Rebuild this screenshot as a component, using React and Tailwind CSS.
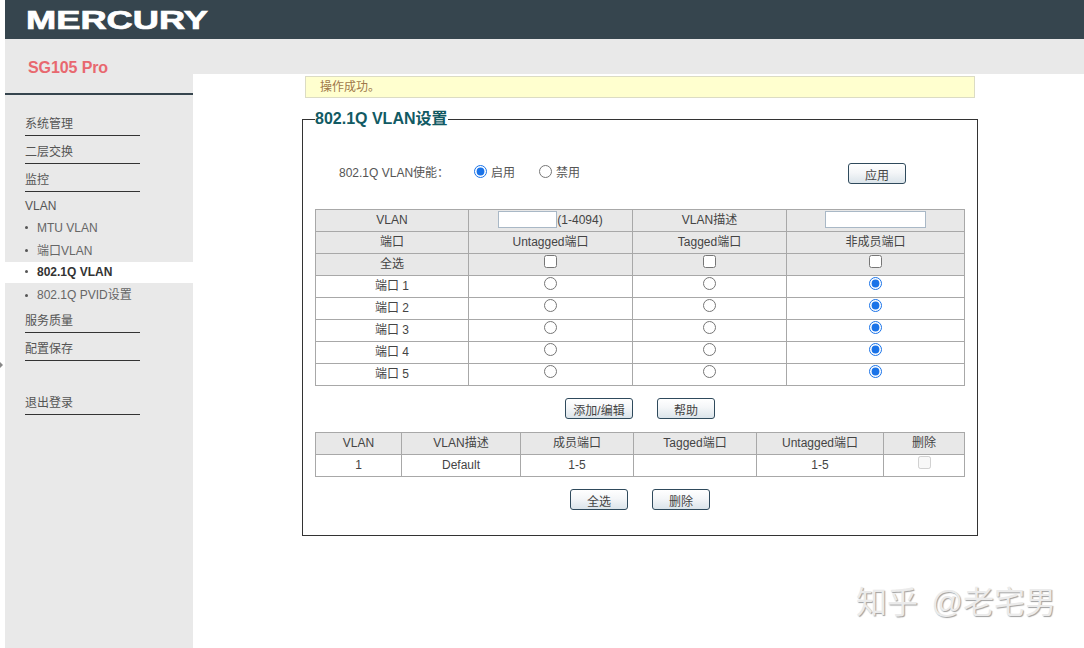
import React from 'react';

const FONT = "font-['Liberation_Sans','Noto_Sans_CJK_SC',sans-serif]";

const Btn = ({ children, className = '' }) => (
  <button
    type="button"
    className={`h-[21px] w-[58px] rounded-[3px] border border-[#2f4a5c] bg-[linear-gradient(180deg,#ffffff_0%,#f4f6f8_45%,#dbe4ea_100%)] pt-[6px] text-center text-xs leading-[13px] text-[#444] ${className}`}
  >
    {children}
  </button>
);

const MenuLine = ({ children }) => (
  <div className="flex h-7 w-[115px] items-center border-b border-[#333] pt-[5px] text-xs text-[#555]">
    {children}
  </div>
);

const SubItem = ({ children, className = 'h-[23px]', active }) => (
  <div
    className={`flex items-center pl-5 text-xs ${className} ${active ? 'bg-white font-bold text-[#333]' : 'text-[#666]'}`}
  >
    <span className="mr-[9px] h-[3px] w-[3px] rounded-full bg-[#555]" />
    {children}
  </div>
);

const cell = 'h-[22px] border border-[#a8a8a8] p-0 pb-[2px] text-center align-middle text-xs leading-none font-normal text-[#444]';
const head = `${cell} bg-[#e8e8e8]`;
const check = 'm-0 mb-[5px] align-middle accent-[#1a73e8]';

const ports = ['端口 1', '端口 2', '端口 3', '端口 4', '端口 5'];

export default function App() {
  return (
    <div className={`relative h-[648px] w-[1084px] overflow-hidden bg-white pl-[5px] ${FONT}`}>
      <header className="flex h-[39px] items-center bg-[#36454e] pl-[20px]">
        <svg width="190" height="28" viewBox="0 0 190 28" aria-label="MERCURY">
          <text
            x="1"
            y="23"
            fontFamily="Liberation Sans"
            fontWeight="700"
            fontSize="26"
            fill="#fff"
            stroke="#fff"
            strokeWidth="0.7"
            textLength="182"
            lengthAdjust="spacingAndGlyphs"
          >
            MERCURY
          </text>
        </svg>
      </header>

      <div className="flex">
        <aside className="h-[609px] w-[188px] shrink-0 bg-[#e9e9e9]">
          <div className="flex h-14 items-center border-b-2 border-[#36454e] pt-[4px] pl-[23px] text-base font-bold tracking-[-0.1px] text-[#e8686f]">
            SG105 Pro
          </div>
          <nav className="pt-[13px]">
            <div className="pl-5">
              <MenuLine>系统管理</MenuLine>
              <MenuLine>二层交换</MenuLine>
              <MenuLine>监控</MenuLine>
              <div className="flex h-6 items-center pt-[4px] text-xs text-[#555]">VLAN</div>
            </div>
            <SubItem>MTU VLAN</SubItem>
            <SubItem>端口VLAN</SubItem>
            <SubItem active className="h-[21px] pb-[2px]">802.1Q VLAN</SubItem>
            <SubItem className="h-[22px] pt-[2px]">802.1Q PVID设置</SubItem>
            <div className="pl-5">
              <MenuLine>服务质量</MenuLine>
              <MenuLine>配置保存</MenuLine>
              <div className="h-[26px]" />
              <MenuLine>退出登录</MenuLine>
            </div>
          </nav>
        </aside>

        <main className="flex-1">
          <div className="h-[35px] bg-[#e9e9e9]" />
          <div className="mt-[2px] ml-[112px] flex h-[22px] w-[670px] items-center border border-[#dcdcc4] bg-[#ffffcf] pl-[14px] text-xs text-[#a0784a]">
            操作成功。
          </div>
          <fieldset className="mt-[11px] ml-[109px] h-[427px] w-[675px] border border-[#333] px-3">
            <legend className="h-5 text-base leading-5 font-bold text-[#115a63]">802.1Q VLAN设置</legend>

            <div className="mt-[34px] flex h-[21px] items-center text-xs text-[#555]">
              <span className="mb-[2px] w-[159px] pl-6">802.1Q VLAN使能：</span>
              <label className="mb-[2px] flex items-center">
                <input type="radio" name="vlan-enable" defaultChecked className="m-0 mr-[4px] mb-[2px] accent-[#1a73e8]" />
                启用
              </label>
              <label className="mb-[2px] ml-6 flex items-center">
                <input type="radio" name="vlan-enable" className="m-0 mr-[4px] mb-[2px] accent-[#1a73e8]" />
                禁用
              </label>
              <Btn className="mr-[59px] ml-auto">应用</Btn>
            </div>

            <table className="mt-[25px] w-[649px] table-fixed border-collapse">
              <colgroup>
                <col className="w-[153px]" />
                <col className="w-[164px]" />
                <col className="w-[154px]" />
                <col className="w-[178px]" />
              </colgroup>
              <tbody>
                <tr>
                  <td className={head}>VLAN</td>
                  <td className={head}>
                    <input type="text" className="h-[17px] w-[59px] border border-[#a9b8c6] bg-white align-middle" />
                    <span className="align-middle">(1-4094)</span>
                  </td>
                  <td className={head}>VLAN描述</td>
                  <td className={head}>
                    <input type="text" className="h-[17px] w-[101px] border border-[#a9b8c6] bg-white align-middle" />
                  </td>
                </tr>
                <tr>
                  <td className={head}>端口</td>
                  <td className={head}>Untagged端口</td>
                  <td className={head}>Tagged端口</td>
                  <td className={head}>非成员端口</td>
                </tr>
                <tr>
                  <td className={head}>全选</td>
                  <td className={head}><input type="checkbox" className={check} /></td>
                  <td className={head}><input type="checkbox" className={check} /></td>
                  <td className={head}><input type="checkbox" className={check} /></td>
                </tr>
                {ports.map((p) => (
                  <tr key={p}>
                    <td className={cell}>{p}</td>
                    <td className={cell}><input type="radio" name={p} className={check} /></td>
                    <td className={cell}><input type="radio" name={p} className={check} /></td>
                    <td className={cell}><input type="radio" name={p} defaultChecked className={check} /></td>
                  </tr>
                ))}
              </tbody>
            </table>

            <div className="mt-3 flex pl-[250px]">
              <Btn className="w-[68px]">添加/编辑</Btn>
              <Btn className="ml-6">帮助</Btn>
            </div>

            <table className="mt-[13px] w-[649px] table-fixed border-collapse">
              <colgroup>
                <col className="w-[86px]" />
                <col className="w-[119px]" />
                <col className="w-[113px]" />
                <col className="w-[123px]" />
                <col className="w-[127px]" />
                <col className="w-[81px]" />
              </colgroup>
              <tbody>
                <tr>
                  <td className={head}>VLAN</td>
                  <td className={head}>VLAN描述</td>
                  <td className={head}>成员端口</td>
                  <td className={head}>Tagged端口</td>
                  <td className={head}>Untagged端口</td>
                  <td className={head}>删除</td>
                </tr>
                <tr>
                  <td className={cell}>1</td>
                  <td className={cell}>Default</td>
                  <td className={cell}>1-5</td>
                  <td className={cell}></td>
                  <td className={cell}>1-5</td>
                  <td className={cell}><input type="checkbox" disabled className={check} /></td>
                </tr>
              </tbody>
            </table>

            <div className="mt-3 flex pl-[255px]">
              <Btn>全选</Btn>
              <Btn className="ml-6">删除</Btn>
            </div>
          </fieldset>
        </main>
      </div>

      <div className="absolute top-[362px] left-0 h-0 w-0 border-y-[3px] border-l-[3px] border-y-transparent border-l-[#888]" />

      <div className="absolute top-[583px] left-[856px] text-[31px] leading-10 whitespace-nowrap text-[#ebebeb] [word-spacing:5px] [text-shadow:1px_1px_1px_#a0a0a0]">
        知乎 @老宅男
      </div>
    </div>
  );
}
